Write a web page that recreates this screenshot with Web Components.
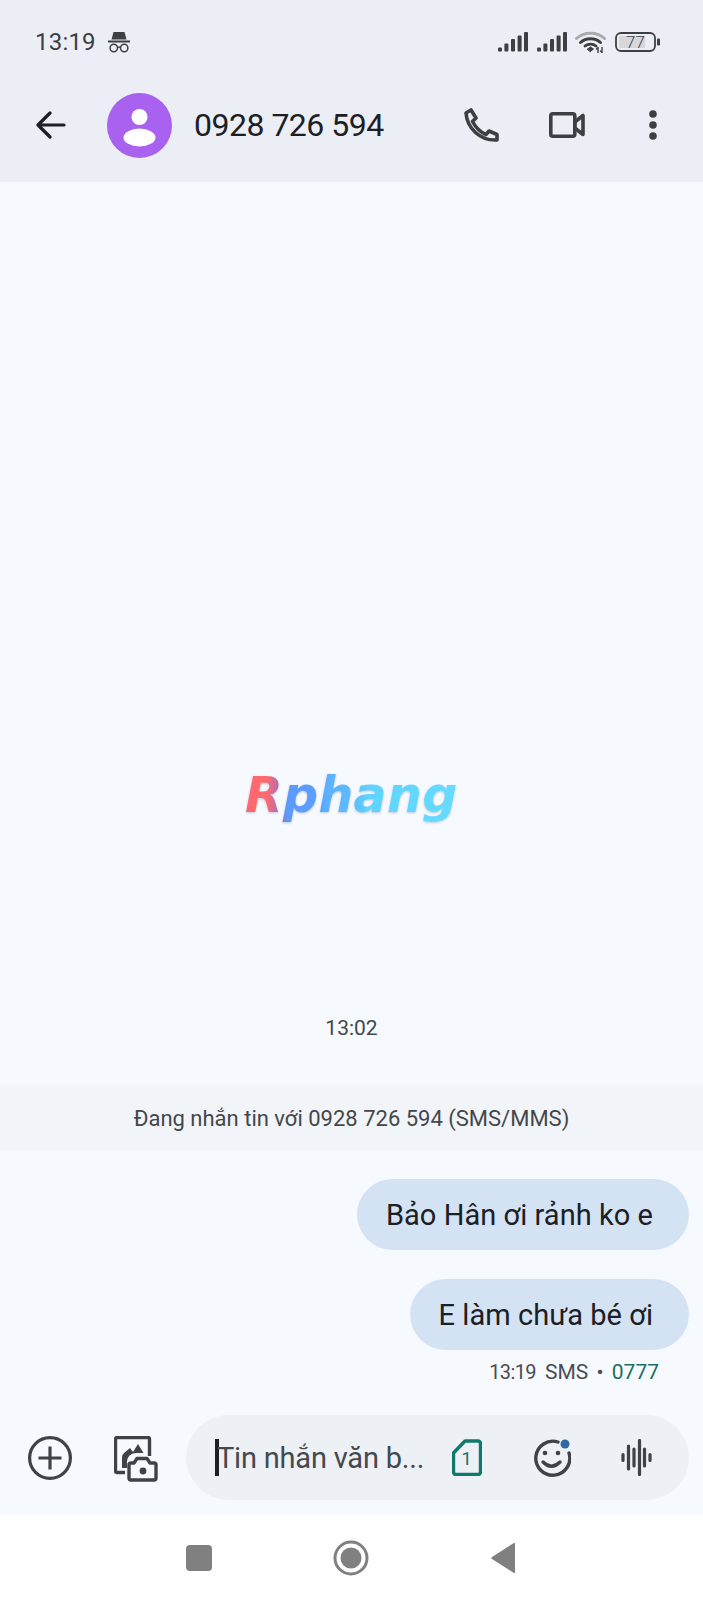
<!DOCTYPE html>
<html lang="vi">
<head>
<meta charset="utf-8">
<title>0928 726 594</title>
<style>
  html, body { margin: 0; height: 1600px; background: #f6f9fe; }
  body { font-family: Roboto, "Noto Sans", sans-serif; color: #1c2024; overflow: hidden; }
</style>
</head>
<body>
<sms-screen>
  <status-bar slot="top" time="13:19"></status-bar>
  <app-bar slot="top" title="0928 726 594"></app-bar>
  <time-stamp>13:02</time-stamp>
  <info-banner>Đang nhắn tin với 0928 726 594 (SMS/MMS)</info-banner>
  <msg-bubble>Bảo Hân ơi rảnh ko e</msg-bubble>
  <msg-bubble>E làm chưa bé ơi</msg-bubble>
  <msg-meta time="13:19" kind="SMS" sim="0777"></msg-meta>
  <compose-bar slot="bottom" placeholder="Tin nhắn văn b..."></compose-bar>
  <nav-bar slot="bottom"></nav-bar>
</sms-screen>

<script>
const define = (name, render) => customElements.define(name, class extends HTMLElement {
  constructor() {
    super()
    this.attachShadow({ mode: 'open' })
  }
  connectedCallback() {
    this.shadowRoot.innerHTML = render(this)
  }
})

const bars = `
<svg width="30" height="20" viewBox="0 0 30 20" fill="#3c4043">
  <rect x="0" y="15.500" width="4" height="4" rx="1"/><rect x="6.400" y="11.500" width="4" height="8" rx="1"/><rect x="13" y="7" width="4" height="12.500" rx="1"/><rect x="19.600" y="3.500" width="4" height="16" rx="1"/><rect x="26" y="0" width="4" height="19.500" rx="1"/>
</svg>`

define('sms-screen', () => `
<style>
  :host { display: flex; flex-direction: column; height: 1600px; position: relative; }
  .top { background: #ebeef4; flex: none; }
  main { flex: 1; display: flex; flex-direction: column; justify-content: flex-end; }
  .logo {
    position: absolute; left: 245px; top: 760px; padding-right: 6px;
    font: oblique 700 49px/72px "DejaVu Sans", sans-serif; letter-spacing: .3px;
    background: linear-gradient(90deg, #ff686c 0%, #ff6a70 10%, #9a70c4 17%, #5d9aff 19%, #5c9fff 34%, #5cb2ff 38%, #5cbcff 50%, #5fd4ff 56%, #66dcff 100%);
    -webkit-background-clip: text; background-clip: text; color: transparent;
    filter: drop-shadow(0 1px 1px rgba(80, 110, 150, .35));
  }
</style>
<div class="top"><slot name="top"></slot></div>
<main><slot></slot></main>
<slot name="bottom"></slot>
<div class="logo">Rphang</div>
`)

define('status-bar', el => `
<style>
  :host { display: flex; align-items: center; height: 84px; padding: 0 43px 0 35px; color: #3c4043; }
  .time { font-size: 24px; line-height: 28px; letter-spacing: .2px; }
  .spy { margin-left: 12px; }
  .right { margin-left: auto; display: flex; align-items: center; gap: 9px; }
  svg { display: block; }
  .wifi { margin-left: -1px; }
  .batt { position: relative; width: 45px; height: 20px; }
  .batt span {
    position: absolute; left: 11px; top: 0; font-size: 17px; font-weight: 300; line-height: 20px; color: #3c4043;
  }
</style>
<span class="time">${el.getAttribute('time')}</span>
<svg class="spy" width="22" height="22" viewBox="0 0 22 22" fill="#3c4043">
  <path d="M5.500 1h11l2 7.500h-15z"/><rect x="0" y="9.500" width="22" height="2"/>
  <g fill="none" stroke="#3c4043" stroke-width="1.500"><circle cx="5.800" cy="17" r="3.700"/><circle cx="16.200" cy="17" r="3.700"/><path d="M9.500 16.500q1.500-1 3 0"/></g>
</svg>
<div class="right">
  ${bars}
  ${bars}
  <svg class="wifi" width="31" height="22" viewBox="0 0 31 22" fill="none" stroke-linecap="round">
    <path d="M1.500 7.500C9 .5 22 .5 29.500 7.500" stroke="#a9acaf" stroke-width="3"/>
    <path d="M5.500 11.500C11 6.500 20 6.500 25.500 11.500" stroke="#3c4043" stroke-width="3"/>
    <path d="M10 15C13 12.500 18 12.500 21 15" stroke="#3c4043" stroke-width="2.800"/>
    <path d="M12.500 18l3-2 3 2-3 2.500z" fill="#3c4043" stroke="#3c4043" stroke-width="1"/>
    <path d="M23 21.500v-5M21.500 18l1.500-1.500M27 16.500v5M25.500 20l1.500 1.500" stroke="#3c4043" stroke-width="1.400"/>
  </svg>
  <div class="batt">
    <svg width="45" height="20" viewBox="0 0 45 20">
      <rect x="1" y="1" width="39" height="18" rx="5" fill="none" stroke="#3c4043" stroke-width="1.800"/>
      <rect x="4" y="4" width="26" height="12" fill="#d5d7da"/>
      <rect x="42" y="6.500" width="3" height="7" rx="1" fill="#3c4043"/>
    </svg>
    <span>77</span>
  </div>
</div>
`)

define('app-bar', el => `
<style>
  :host { display: flex; align-items: center; height: 82px; margin-bottom: 16px; padding: 0 0 0 36px; }
  svg { display: block; flex: none; }
  .avatar { margin-left: 41px; }
  .title { margin-left: 22px; font-size: 32px; line-height: 40px; letter-spacing: -.5px; color: #1c2024; flex: 1; white-space: nowrap; }
  .phone { margin-right: 50px; }
  .video { margin-right: 64px; }
  .more { margin-right: 46px; }
</style>
<svg width="30" height="28" viewBox="0 0 30 28" fill="none" stroke="#1c2024" stroke-width="3.200" stroke-linecap="round" stroke-linejoin="round">
  <path d="M2 14h26M14 2 2 14l12 12"/>
</svg>
<svg class="avatar" width="65" height="65" viewBox="0 0 65 65">
  <circle cx="32.500" cy="32.500" r="32.500" fill="#a962ef"/>
  <circle cx="32.500" cy="24" r="8" fill="#fff"/>
  <ellipse cx="32.500" cy="44.500" rx="16" ry="9" fill="#fff"/>
</svg>
<span class="title">${el.getAttribute('title')}</span>
<svg class="phone" width="35" height="34" viewBox="0 0 35 34" fill="none" stroke="#3c4043" stroke-width="3.600" stroke-linejoin="round">
  <path d="M2 5 7 2l5 8-3.500 3.500C12 20 16 24 22 26.500l3-3.500 8 3.500V32C16 33 3 20 2 5z"/>
</svg>
<svg class="video" width="36" height="26" viewBox="0 0 36 26" fill="none" stroke="#3c4043" stroke-width="3.600" stroke-linejoin="round">
  <rect x="1.800" y="1.800" width="24" height="22.400" rx="2"/>
  <path d="M25.800 10 34 3.500v19L25.800 16z"/>
</svg>
<svg class="more" width="8" height="30" viewBox="0 0 8 30" fill="#3c4043">
  <circle cx="4" cy="4" r="3.800"/><circle cx="4" cy="15" r="3.800"/><circle cx="4" cy="26" r="3.800"/>
</svg>
`)

define('time-stamp', () => `
<style>
  :host { display: block; text-align: center; font-size: 21px; line-height: 26px; color: #44474a; margin-bottom: 44px; }
</style>
<slot></slot>
`)

define('info-banner', () => `
<style>
  :host {
    display: flex; align-items: center; justify-content: center; height: 66px;
    background: #f1f4f9; font-size: 22px; color: #44474a; margin-bottom: 28px;
  }
</style>
<slot></slot>
`)

define('msg-bubble', () => `
<style>
  :host { display: flex; justify-content: flex-end; padding-right: 14px; margin-bottom: 29px; }
  div {
    height: 71px; display: flex; align-items: center; padding: 0 36px 0 29px;
    border-radius: 36px; background: #d3e3f4; font-size: 29px; letter-spacing: .05px; color: #1c2024;
  }
</style>
<div><slot></slot></div>
`)

define('msg-meta', el => `
<style>
  :host {
    display: flex; justify-content: flex-end; align-items: baseline; gap: 9px; margin-top: -20px; height: 26px; margin-bottom: 30px;
    padding-right: 44px; font-size: 21px; line-height: 26px; color: #4a4d50;
  }
  .time { font-size: 20px; letter-spacing: -.6px; }
  .kind { word-spacing: 3px; }
  b { font-weight: 400; color: #1a6f62; }
</style>
<span class="time">${el.getAttribute('time')}</span>
<span class="kind">${el.getAttribute('kind')} • <b>${el.getAttribute('sim')}</b></span>
`)

define('compose-bar', el => `
<style>
  :host { display: flex; align-items: center; height: 85px; padding: 0 14px 15px 28px; }
  svg { display: block; flex: none; }
  .gallery { margin-left: 42px; margin-top: 3px; }
  .pill {
    margin-left: 28px; flex: 1; height: 85px; border-radius: 43px; background: #edf0f5;
    display: flex; align-items: center; padding-left: 29px; position: relative;
  }
  .caret { width: 4px; height: 37px; background: #1c2024; flex: none; }
  .text { font-size: 29px; line-height: 36px; letter-spacing: -.2px; color: #46494c; margin-left: -2px; white-space: nowrap; width: 235px; }
  .emoji { margin-left: 51px; }
  .voice { margin-left: 50px; }
</style>
<svg width="44" height="44" viewBox="0 0 44 44" fill="none" stroke="#3f4347" stroke-width="3.200">
  <circle cx="22" cy="22" r="20.400"/><path d="M22 10.500v23M10.500 22h23"/>
</svg>
<svg class="gallery" width="44" height="46" viewBox="0 0 44 46" fill="none" stroke="#3f4347" stroke-width="3.400" stroke-linejoin="round">
  <path d="M11 36.500H3a1.500 1.500 0 0 1-1.500-1.500V3A1.500 1.500 0 0 1 3 1.500h31A1.500 1.500 0 0 1 35.500 3v17"/>
  <path d="M8 32V21q0-2 2-4l6-5 3 4 5-8 5.500 9H21q-7 1-8 8v7z" fill="#3f4347" stroke="none"/>
  <path d="M17 27h3l3-4.500h10l3 4.500h4a2 2 0 0 1 2 2v13a2 2 0 0 1-2 2H17a2 2 0 0 1-2-2V29a2 2 0 0 1 2-2z"/>
  <circle cx="29" cy="35" r="3.400" fill="#3f4347" stroke="none"/>
</svg>
<div class="pill">
  <span class="caret"></span>
  <span class="text">${el.getAttribute('placeholder')}</span>
  <svg width="30" height="37" viewBox="0 0 30 37">
    <path d="M13 2h13a2.500 2.500 0 0 1 2.500 2.500v28.500a2.500 2.500 0 0 1-2.500 2.500H4a2.500 2.500 0 0 1-2.500-2.500V14z" fill="none" stroke="#0f7a6c" stroke-width="3.400" stroke-linejoin="round"/>
    <text x="14.500" y="26" text-anchor="middle" font-family="Roboto, sans-serif" font-size="19" fill="#0f7a6c">1</text>
  </svg>
  <svg class="emoji" width="38" height="38" viewBox="0 0 38 38" fill="none" stroke="#3f4347" stroke-width="3.400" stroke-linecap="round">
    <path d="M25 3a17 17 0 1 0 11 11"/>
    <path d="M10 23q8.500 8.500 17 0"/>
    <circle cx="12" cy="14" r="2.300" fill="#3f4347" stroke="none"/><circle cx="25" cy="14" r="2.300" fill="#3f4347" stroke="none"/>
    <circle cx="32" cy="5" r="4.500" fill="#2f6aa3" stroke="none"/>
  </svg>
  <svg class="voice" width="31" height="37" viewBox="0 0 31 37" fill="none" stroke="#3f4347" stroke-width="3.200" stroke-linecap="round">
    <path d="M2 15.500v6M7.500 7v23M13 10v17M18.500 1.500v34M23.500 10v17M29 15.500v6"/>
  </svg>
</div>
`)

define('nav-bar', () => `
<style>
  :host { display: flex; align-items: center; height: 85px; background: #fff; padding: 0 0 0 186px; }
  svg { display: block; flex: none; }
  .home { margin-left: 121px; }
  .back { margin-left: 122px; }
</style>
<svg width="26" height="26" viewBox="0 0 26 26"><rect width="26" height="26" rx="4" fill="#808080"/></svg>
<svg class="home" width="36" height="36" viewBox="0 0 36 36">
  <circle cx="18" cy="18" r="16" fill="none" stroke="#808080" stroke-width="3"/>
  <circle cx="18" cy="18" r="10.500" fill="#808080"/>
</svg>
<svg class="back" width="25" height="30" viewBox="0 0 25 30"><path d="M24 1v28a1 1 0 0 1-1.500.8L1 16a1.200 1.200 0 0 1 0-2L22.500.2A1 1 0 0 1 24 1z" fill="#808080"/></svg>
`)
</script>
</body>
</html>
